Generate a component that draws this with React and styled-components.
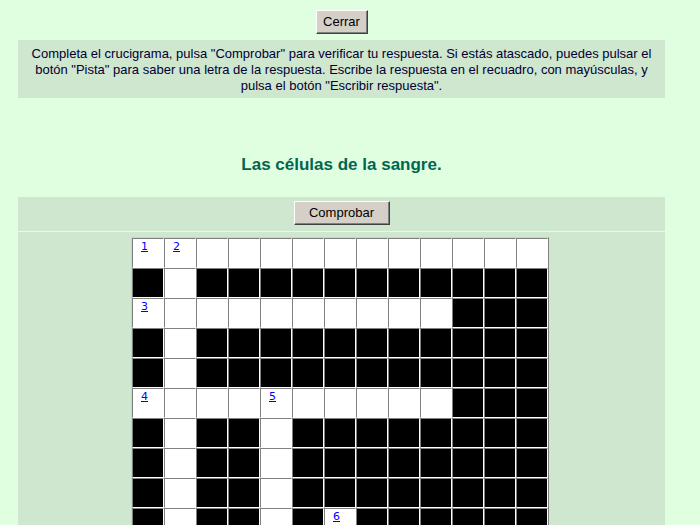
import React from 'react';
import styled, { createGlobalStyle } from 'styled-components';

const Global = createGlobalStyle`
  html, body { margin: 0; padding: 0; background: #e0ffe0; }
  body { font-family: "Liberation Sans", Arial, sans-serif; overflow: hidden; }
`;

const Page = styled.div`
  width: 683px;
  display: flex;
  flex-direction: column;
  align-items: center;
`;

const Content = styled.div`
  width: 647px;
  display: flex;
  flex-direction: column;
`;

const NavBar = styled.div`
  display: flex;
  justify-content: center;
  padding-top: 10px;
  margin-bottom: 6px;
`;

const Button = styled.button`
  font-family: "Liberation Sans", Arial, sans-serif;
  font-size: 13px;
  color: #000;
  width: ${p => p.$w}px;
  height: 24px;
  padding: 0;
  background: #d4d0c8;
  border: 1px solid;
  border-color: #ffffff #404040 #404040 #ffffff;
  box-shadow: inset -1px -1px #808080;
  border-radius: 0;
  cursor: pointer;
  line-height: 20px;
`;

const Instructions = styled.div`
  background: #cfe6cf;
  color: #000033;
  font-size: 13px;
  line-height: 16px;
  text-align: center;
  padding: 6px 6px 4px;
`;

const Title = styled.h2`
  margin: 57px 0 22px;
  font-size: 17px;
  line-height: 20px;
  font-weight: bold;
  color: #006652;
  text-align: center;
`;

const ExerciseHead = styled.div`
  background: #cfe6cf;
  display: flex;
  justify-content: center;
  padding: 4px 0 6px;
`;

const GridArea = styled.div`
  margin-top: 1px;
  background: #cfe6cf;
  display: flex;
  justify-content: center;
  padding: 5px 3px 40px 0;
`;

const Grid = styled.table`
  border-collapse: separate;
  border-spacing: 0;
  border: 1px solid;
  border-color: #d4d0c8 #808080 #808080 #d4d0c8;
`;

const Cell = styled.td`
  width: 30px;
  height: 28px;
  padding: 0;
  box-sizing: content-box;
  border: 1px solid;
  border-color: #808080 #ffffff #ffffff #808080;
  background: ${p => (p.$blank ? '#000000' : '#ffffff')};
  vertical-align: top;
`;

const Num = styled.a`
  display: block;
  padding: 2px 0 0 8px;
  font-family: "DejaVu Sans", Verdana, sans-serif;
  font-size: 11px;
  line-height: 12px;
  color: #0000ff;
  text-decoration: underline;
`;

const rows = [
  '12...........',
  '#.###########',
  '3.........###',
  '#.###########',
  '#.###########',
  '4...5.....###',
  '#.##.########',
  '#.##.########',
  '#.##.########',
  '#.##.#6######',
  '#.##.#.######',
  '#.##.#.######',
  '#####.#######',
];

export default function App() {
  return (
    <>
      <Global />
      <Page>
        <NavBar>
          <Button $w={52}>Cerrar</Button>
        </NavBar>
        <Content>
          <Instructions>
            Completa el crucigrama, pulsa "Comprobar" para verificar tu respuesta. Si estás atascado, puedes pulsar el
            botón "Pista" para saber una letra de la respuesta. Escribe la respuesta en el recuadro, con mayúsculas, y
            pulsa el botón "Escribir respuesta".
          </Instructions>
          <Title>Las células de la sangre.</Title>
          <ExerciseHead>
            <Button $w={96}>Comprobar</Button>
          </ExerciseHead>
          <GridArea>
            <Grid>
              <tbody>
                {rows.map((r, ri) => (
                  <tr key={ri}>
                    {r.split('').map((c, ci) => (
                      <Cell key={ci} $blank={c === '#'}>
                        {/[0-9]/.test(c) ? <Num href="#">{c}</Num> : null}
                      </Cell>
                    ))}
                  </tr>
                ))}
              </tbody>
            </Grid>
          </GridArea>
        </Content>
      </Page>
    </>
  );
}
